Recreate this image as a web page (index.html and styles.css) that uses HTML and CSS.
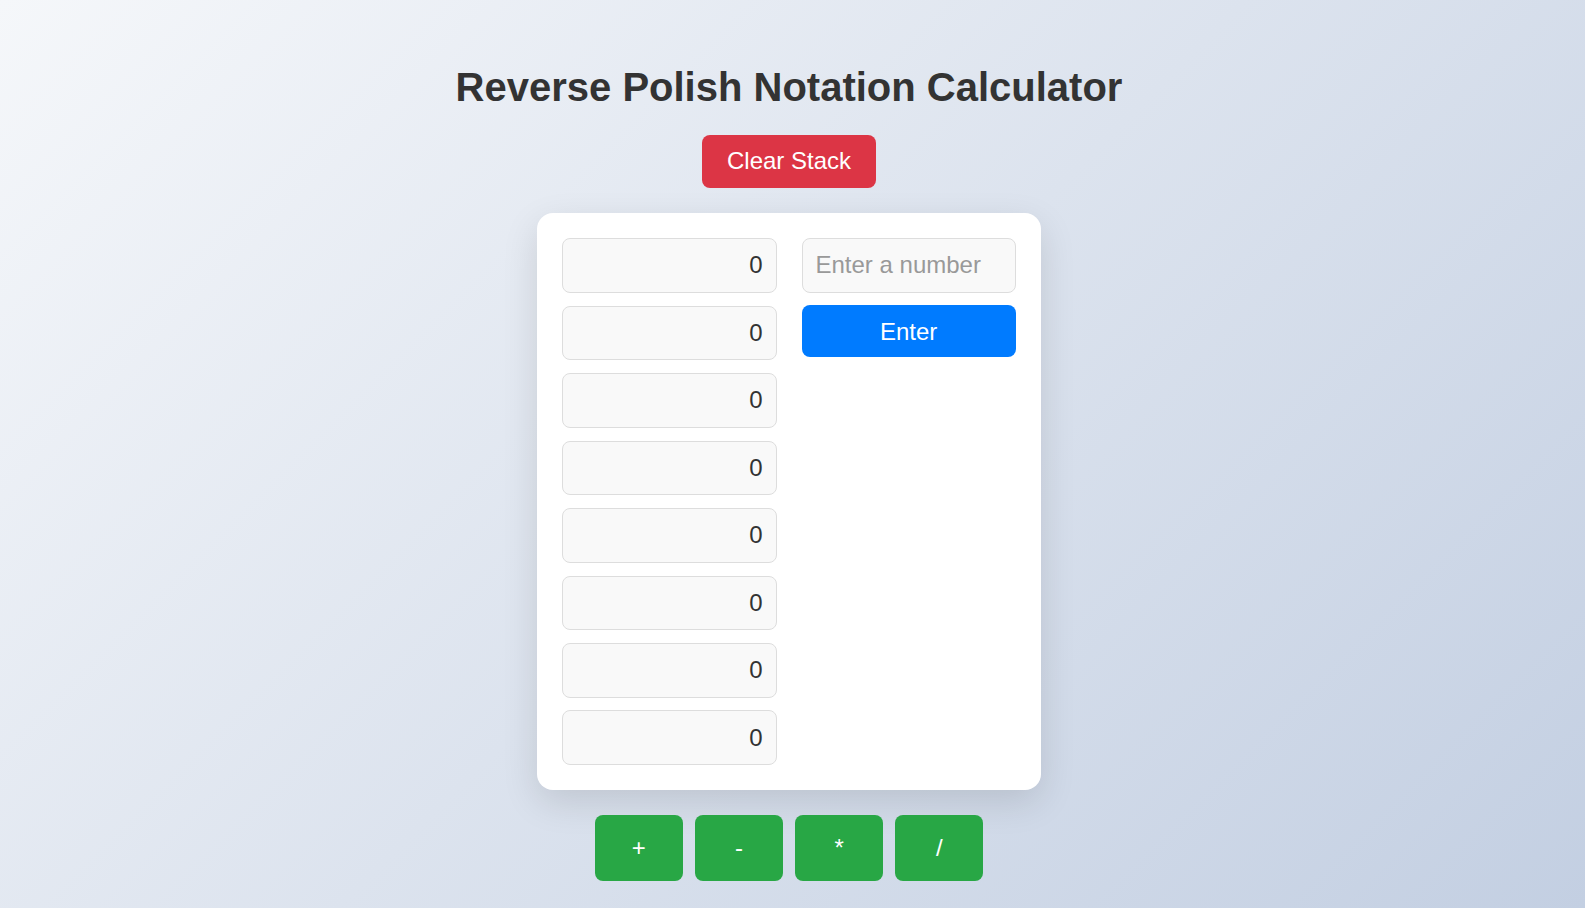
FILE: index.html
```html
<!DOCTYPE html>
<html lang="en">
<head>
<meta charset="utf-8">
<title>Reverse Polish Notation Calculator</title>
<link rel="stylesheet" href="styles.css">
</head>
<body>
  <main class="app">
    <h1 class="title">Reverse Polish Notation Calculator</h1>
    <button class="btn btn-clear" type="button">Clear Stack</button>
    <section class="card">
      <div class="stack">
        <input class="field stack-field" type="text" value="0" readonly>
        <input class="field stack-field" type="text" value="0" readonly>
        <input class="field stack-field" type="text" value="0" readonly>
        <input class="field stack-field" type="text" value="0" readonly>
        <input class="field stack-field" type="text" value="0" readonly>
        <input class="field stack-field" type="text" value="0" readonly>
        <input class="field stack-field" type="text" value="0" readonly>
        <input class="field stack-field" type="text" value="0" readonly>
      </div>
      <div class="entry">
        <input class="field entry-field" type="text" placeholder="Enter a number">
        <button class="btn btn-enter" type="button">Enter</button>
      </div>
    </section>
    <div class="ops">
      <button class="btn btn-op" type="button">+</button>
      <button class="btn btn-op" type="button">-</button>
      <button class="btn btn-op" type="button">*</button>
      <button class="btn btn-op" type="button">/</button>
    </div>
  </main>
</body>
</html>
```

FILE: styles.css
```css
html {
  min-height: 100%;
  background: linear-gradient(135deg, #f5f7fa 0%, #c3cfe2 100%);
}

body {
  margin: 0;
  padding: 37.5px 7px 0 0;
  font-family: "Liberation Sans", Arial, sans-serif;
  color: #333;
}

.app {
  display: flex;
  flex-direction: column;
  align-items: center;
}

.title {
  margin: 26.8px 0 25px;
  font-size: 40px;
  font-weight: bold;
  line-height: 46px;
  color: #333;
}

.btn {
  font-family: "Liberation Sans", Arial, sans-serif;
  font-size: 24px;
  line-height: 27.6px;
  color: #fff;
  border: none;
  border-radius: 8px;
  cursor: pointer;
}

.btn-clear {
  background: #dc3545;
  padding: 11.8px 25px 13.4px;
}

.card {
  margin-top: 25px;
  width: 503.7px;
  box-sizing: border-box;
  padding: 25px;
  background: #fff;
  border-radius: 16px;
  box-shadow: 0 12px 36px rgba(0, 0, 0, 0.12);
  display: grid;
  grid-template-columns: 1fr 1fr;
  column-gap: 25px;
  align-items: start;
}

.stack {
  display: flex;
  flex-direction: column;
  gap: 12.7px;
}

.entry {
  display: flex;
  flex-direction: column;
  gap: 12px;
}

.field {
  box-sizing: border-box;
  width: 100%;
  height: 54.8px;
  margin: 0;
  padding: 12.5px 13px;
  font-family: "Liberation Sans", Arial, sans-serif;
  font-size: 24px;
  color: #333;
  background: #f9f9f9;
  border: 1px solid #ddd;
  border-radius: 8px;
  outline: none;
}

.stack-field {
  text-align: right;
}

.entry-field::placeholder {
  color: #999;
}

.btn-enter {
  width: 100%;
  height: 52.6px;
  background: #007bff;
  padding: 1px 0 0;
}

.ops {
  margin-top: 25px;
  display: flex;
  gap: 12.2px;
}

.btn-op {
  width: 88px;
  height: 65.7px;
  padding: 0;
  background: #28a745;
}
```
